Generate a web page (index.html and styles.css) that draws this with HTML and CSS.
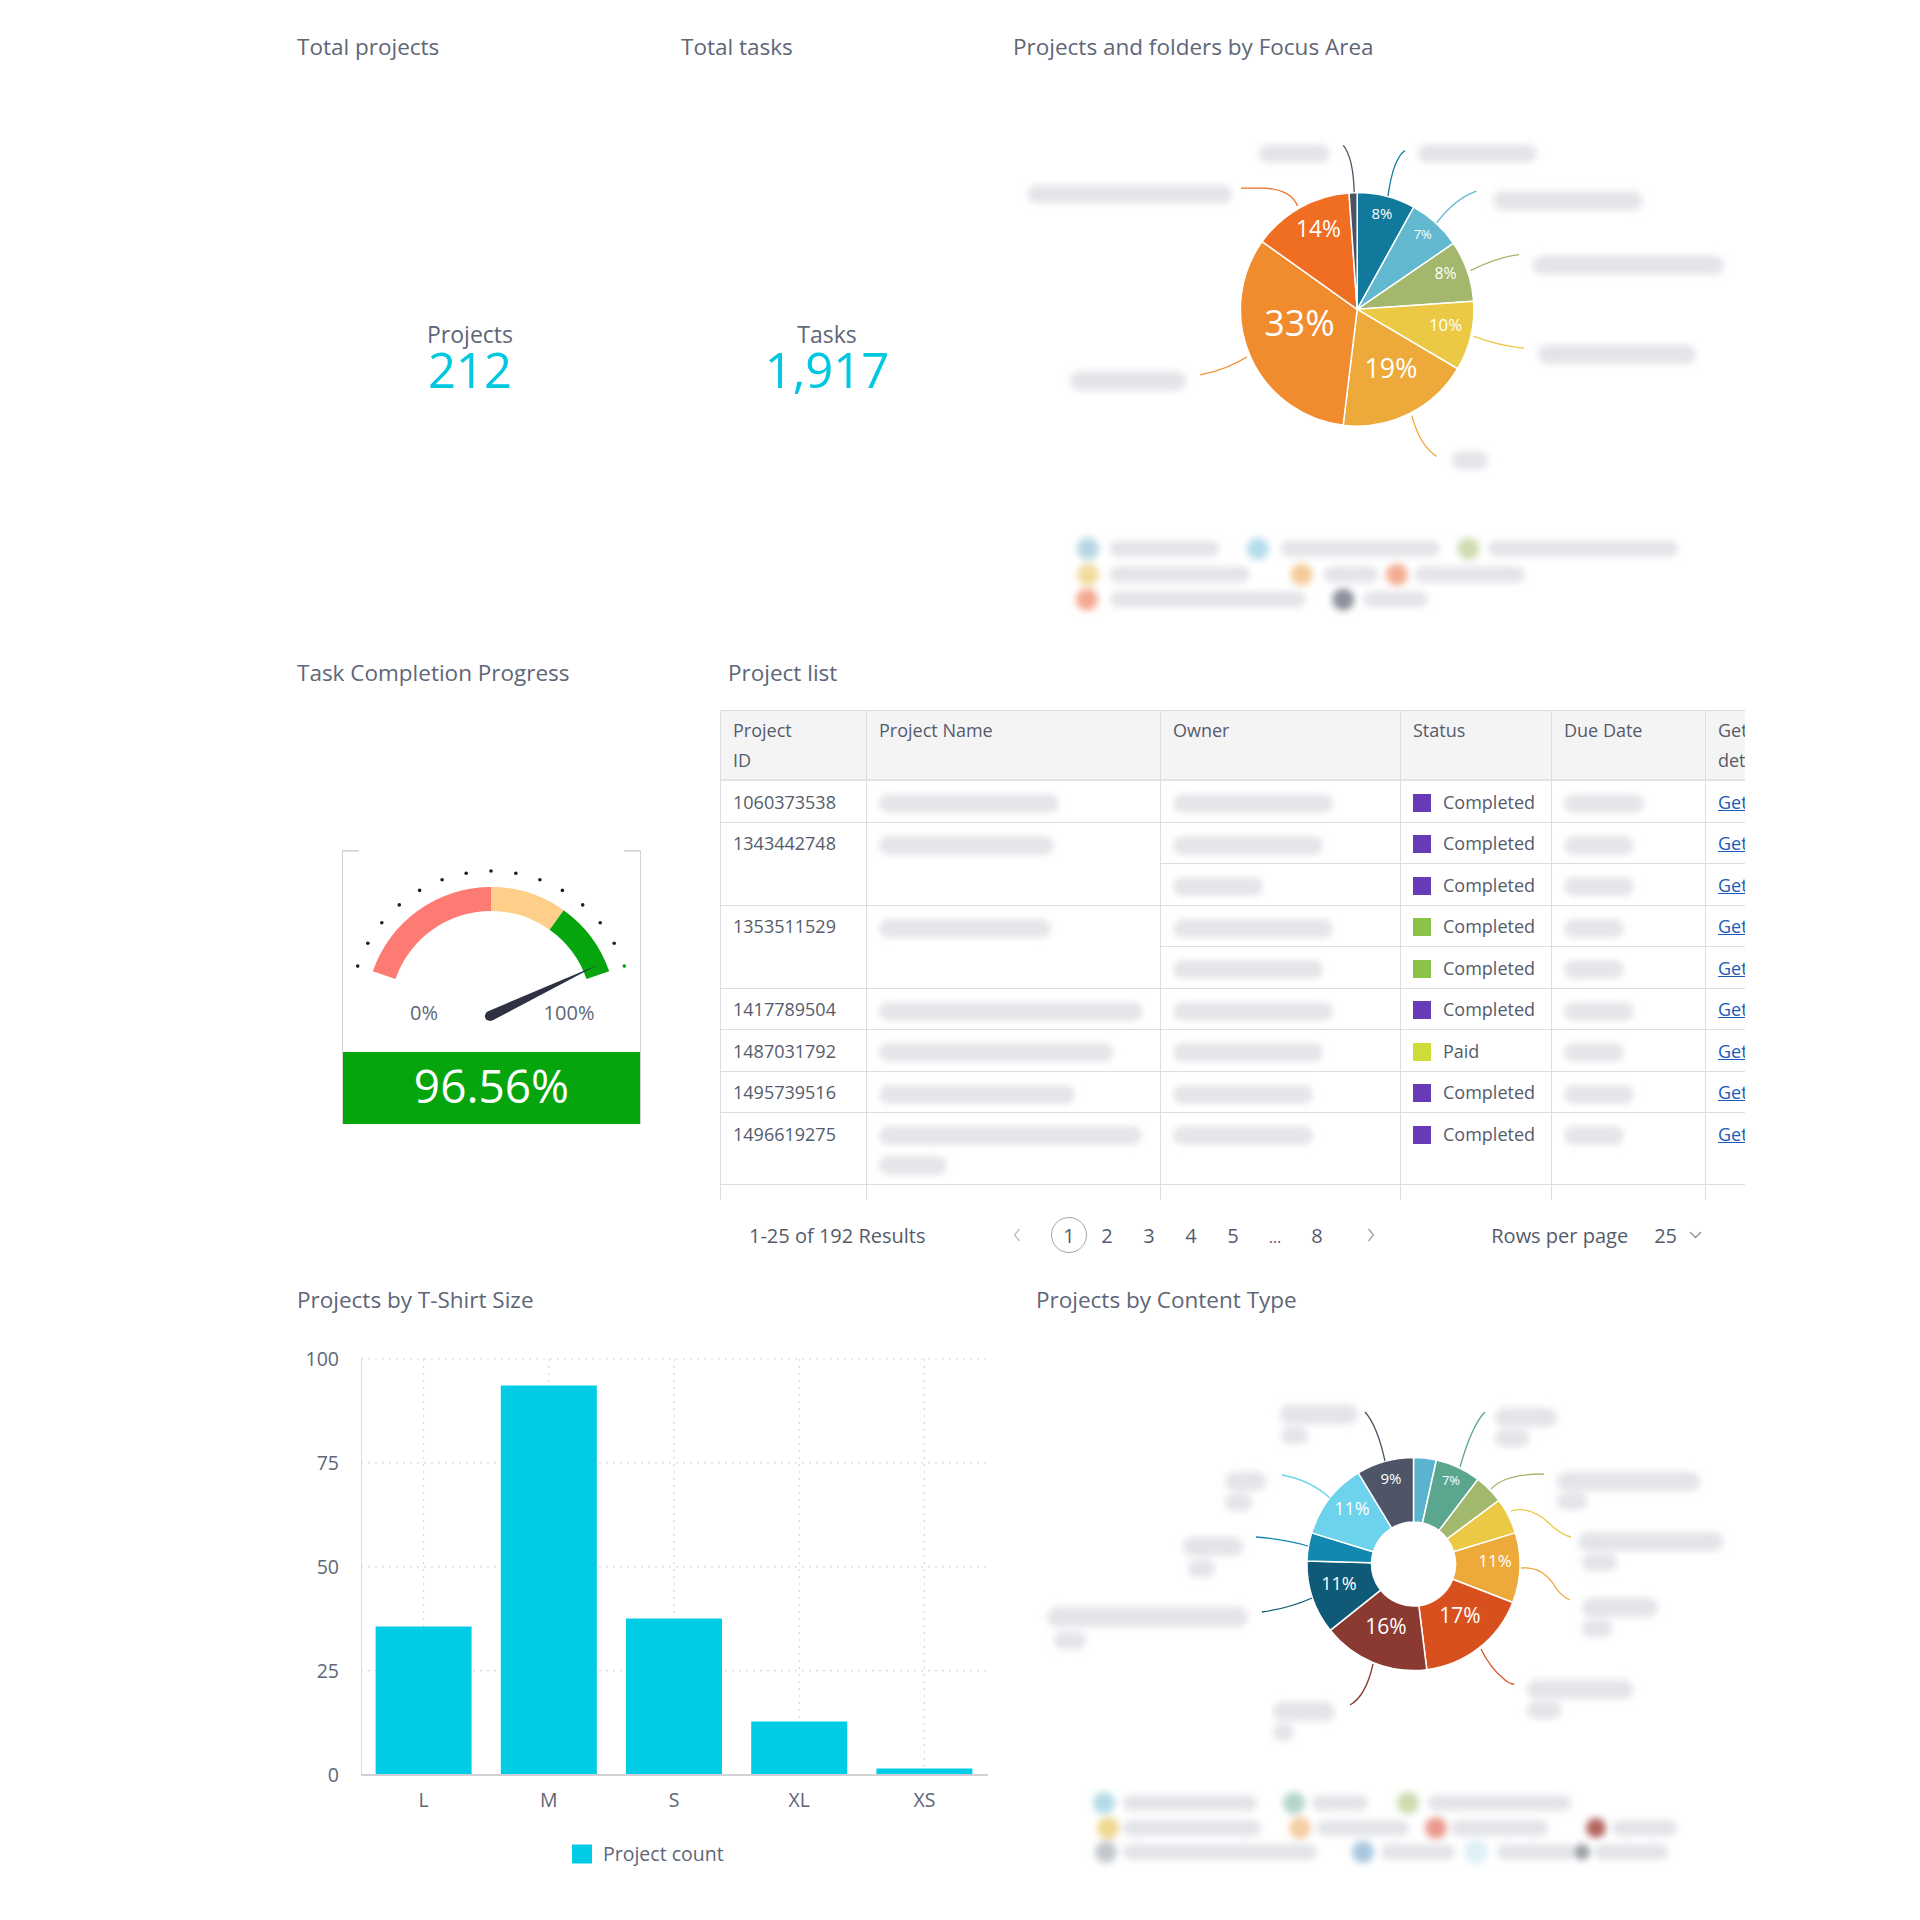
FILE: index.html
```html
<!DOCTYPE html>
<html lang="en">
<head>
<meta charset="utf-8">
<title>Projects dashboard</title>
<link rel="stylesheet" href="styles.css">
</head>
<body>
<div class="dash">

  <div class="row row1">
    <section class="panel p-projects">
      <h2 class="title">Total projects</h2>
      <div class="kpi">
        <div class="kpi-label">Projects</div>
        <div class="kpi-value">212</div>
      </div>
    </section>
    <section class="panel p-tasks">
      <h2 class="title">Total tasks</h2>
      <div class="kpi">
        <div class="kpi-label">Tasks</div>
        <div class="kpi-value">1,917</div>
      </div>
    </section>
    <section class="panel p-focus">
      <h2 class="title">Projects and folders by Focus Area</h2>
      <svg class="chart" width="740" height="602" viewBox="1013 61 740 602">
        <defs><filter id="blA" x="-30%" y="-80%" width="160%" height="260%"><feGaussianBlur stdDeviation="3.5"/></filter></defs>
        <g stroke="#fff" stroke-width="1.5" stroke-linejoin="round">
          <path fill="#117a9c" d="M1357 311 L1357 193.5 A117.5 117.5 0 0 1 1414 208.2 Z"/>
          <path fill="#62b8ce" d="M1357 311 L1414 208.2 A117.5 117.5 0 0 1 1453.9 244.6 Z"/>
          <path fill="#a3b86c" d="M1357 311 L1453.9 244.6 A117.5 117.5 0 0 1 1474.2 302.8 Z"/>
          <path fill="#ebc944" d="M1357 311 L1474.2 302.8 A117.5 117.5 0 0 1 1458.1 370.8 Z"/>
          <path fill="#edaa3a" d="M1357 311 L1458.1 370.8 A117.5 117.5 0 0 1 1342.9 427.7 Z"/>
          <path fill="#f08b2e" d="M1357 311 L1342.9 427.7 A117.5 117.5 0 0 1 1261.3 242.8 Z"/>
          <path fill="#f06e22" d="M1357 311 L1261.3 242.8 A117.5 117.5 0 0 1 1348.8 193.8 Z"/>
          <path fill="#4a5264" d="M1357 311 L1348.8 193.8 A117.5 117.5 0 0 1 1357 193.5 Z"/>
        </g>
        <g fill="#fff" text-anchor="middle" dominant-baseline="central" class="svgtext">
          <text x="1382" y="214" font-size="15">8%</text>
          <text x="1423" y="235" font-size="13">7%</text>
          <text x="1446" y="274" font-size="16">8%</text>
          <text x="1446" y="326" font-size="17">10%</text>
          <text x="1391" y="370" font-size="27">19%</text>
          <text x="1299" y="324" font-size="36">33%</text>
          <text x="1318" y="230" font-size="23">14%</text>
        </g>
        <g fill="none" stroke-width="1.3">
          <path stroke="#4a5264" d="M1354 193 Q1353 158 1343 146"/>
          <path stroke="#117a9c" d="M1388 197 Q1393 160 1405 151"/>
          <path stroke="#62b8ce" d="M1437 224 Q1455 200 1477 192"/>
          <path stroke="#a3b86c" d="M1471 272 Q1500 258 1520 256"/>
          <path stroke="#ebc944" d="M1474 338 Q1500 348 1525 350"/>
          <path stroke="#edaa3a" d="M1412 418 Q1420 448 1437 459"/>
          <path stroke="#f08b2e" d="M1246 359 Q1225 372 1199 377"/>
          <path stroke="#f06e22" d="M1297 207 Q1290 190 1262 189 L1240 189"/>
        </g>
        <g fill="#e3e4e8" filter="url(#blA)">
          <rect x="1258" y="145" width="71" height="18" rx="9"/>
          <rect x="1418" y="145" width="120" height="18" rx="9"/>
          <rect x="1494" y="192" width="150" height="19" rx="9"/>
          <rect x="1534" y="257" width="192" height="19" rx="9"/>
          <rect x="1539" y="347" width="159" height="19" rx="9"/>
          <rect x="1452" y="454" width="37" height="18" rx="9"/>
          <rect x="1068" y="373" width="117" height="20" rx="10"/>
          <rect x="1025" y="186" width="206" height="18" rx="9"/>
          <circle cx="1086" cy="552" r="11" fill="#b5d6e2"/>
          <rect x="1108" y="544" width="110" height="16" rx="8"/>
          <circle cx="1257" cy="552" r="11" fill="#b3dcec"/>
          <rect x="1280" y="544" width="160" height="16" rx="8"/>
          <circle cx="1469" cy="552" r="11" fill="#cfdcb0"/>
          <rect x="1489" y="544" width="191" height="16" rx="8"/>
          <circle cx="1086" cy="578" r="11" fill="#f1dc9c"/>
          <rect x="1108" y="570" width="141" height="16" rx="8"/>
          <circle cx="1301" cy="578" r="11" fill="#f5cb98"/>
          <rect x="1323" y="570" width="55" height="16" rx="8"/>
          <circle cx="1397" cy="578" r="11" fill="#f3ad92"/>
          <rect x="1415" y="570" width="111" height="16" rx="8"/>
          <circle cx="1085" cy="603" r="11" fill="#f4a78f"/>
          <rect x="1108" y="595" width="197" height="16" rx="8"/>
          <circle cx="1343" cy="603" r="11" fill="#8d919b"/>
          <rect x="1363" y="595" width="65" height="16" rx="8"/>
        </g>
      </svg>
    </section>
  </div>

  <div class="row row2">
    <section class="panel p-gauge">
      <h2 class="title">Task Completion Progress</h2>
      <div class="gauge-box">
        <svg class="gauge" width="297" height="202" viewBox="343 850 297 202">
          <g stroke="#cfcfcf" stroke-width="1.5">
            <line x1="343" y1="850.75" x2="359" y2="850.75"/>
            <line x1="624" y1="850.75" x2="640" y2="850.75"/>
          </g>
          <path fill="#fe7b74" d="M372.8 971.3 A125 125 0 0 1 491 887 L491 911 A101 101 0 0 0 395.5 979.1 Z"/>
          <path fill="#ffce88" d="M491 887 A125 125 0 0 1 563.6 910.2 L549.65 929.8 A101 101 0 0 0 491 911 Z"/>
          <path fill="#06a50e" d="M563.6 910.2 A125 125 0 0 1 609.2 971.3 L586.5 979.1 A101 101 0 0 0 549.65 929.8 Z"/>
          <g fill="#1d1f24">
            <circle cx="357.7" cy="966.1" r="1.8"/>
            <circle cx="367.8" cy="943.3" r="1.8"/>
            <circle cx="381.8" cy="922.8" r="1.8"/>
            <circle cx="399.3" cy="904.9" r="1.8"/>
            <circle cx="419.6" cy="890.4" r="1.8"/>
            <circle cx="442.1" cy="879.7" r="1.8"/>
            <circle cx="466.2" cy="873.2" r="1.8"/>
            <circle cx="491" cy="871" r="1.8"/>
            <circle cx="515.8" cy="873.2" r="1.8"/>
            <circle cx="539.9" cy="879.7" r="1.8"/>
            <circle cx="562.4" cy="890.4" r="1.8"/>
            <circle cx="582.7" cy="904.9" r="1.8"/>
            <circle cx="600.2" cy="922.8" r="1.8"/>
            <circle cx="614.2" cy="943.3" r="1.8"/>
          </g>
          <circle cx="624.3" cy="966.1" r="1.8" fill="#06a50e"/>
          <g fill="#2d3142">
            <path d="M487.6 1011.5 L597.5 965 L492.4 1020.5 Z"/>
            <circle cx="490" cy="1016" r="5.1"/>
          </g>
          <g class="svgtext" fill="#5e6678" font-size="20" text-anchor="middle">
            <text x="424" y="1020">0%</text>
            <text x="569" y="1020">100%</text>
          </g>
        </svg>
        <div class="gauge-value">96.56%</div>
      </div>
    </section>

    <section class="panel p-list">
      <h2 class="title list-title">Project list</h2>
      <div class="table-wrap">
        <table class="ptable">
          <colgroup>
            <col class="c-id"><col class="c-name"><col class="c-owner"><col class="c-status"><col class="c-due"><col class="c-get">
          </colgroup>
          <thead>
            <tr><th>Project<br>ID</th><th>Project Name</th><th>Owner</th><th>Status</th><th>Due Date</th><th>Get<br>details</th></tr>
          </thead>
          <tbody>
            <tr>
              <td>1060373538</td><td><span class="blob w180"></span></td><td><span class="blob w160"></span></td>
              <td><span class="sq sq-purple"></span>Completed</td><td><span class="blob w80"></span></td><td><a href="#">Get details</a></td>
            </tr>
            <tr>
              <td rowspan="2">1343442748</td><td rowspan="2"><span class="blob w175"></span></td><td><span class="blob w150"></span></td>
              <td><span class="sq sq-purple"></span>Completed</td><td><span class="blob w70"></span></td><td><a href="#">Get details</a></td>
            </tr>
            <tr>
              <td><span class="blob w90"></span></td>
              <td><span class="sq sq-purple"></span>Completed</td><td><span class="blob w70"></span></td><td><a href="#">Get details</a></td>
            </tr>
            <tr>
              <td rowspan="2">1353511529</td><td rowspan="2"><span class="blob w172"></span></td><td><span class="blob w160"></span></td>
              <td><span class="sq sq-green"></span>Completed</td><td><span class="blob w60"></span></td><td><a href="#">Get details</a></td>
            </tr>
            <tr>
              <td><span class="blob w150"></span></td>
              <td><span class="sq sq-green"></span>Completed</td><td><span class="blob w60"></span></td><td><a href="#">Get details</a></td>
            </tr>
            <tr>
              <td>1417789504</td><td><span class="blob w264"></span></td><td><span class="blob w160"></span></td>
              <td><span class="sq sq-purple"></span>Completed</td><td><span class="blob w70"></span></td><td><a href="#">Get details</a></td>
            </tr>
            <tr>
              <td>1487031792</td><td><span class="blob w234"></span></td><td><span class="blob w150"></span></td>
              <td><span class="sq sq-lime"></span>Paid</td><td><span class="blob w60"></span></td><td><a href="#">Get details</a></td>
            </tr>
            <tr>
              <td>1495739516</td><td><span class="blob w196"></span></td><td><span class="blob w140"></span></td>
              <td><span class="sq sq-purple"></span>Completed</td><td><span class="blob w70"></span></td><td><a href="#">Get details</a></td>
            </tr>
            <tr>
              <td>1496619275</td><td><span class="blob w263"></span><br><span class="blob w68"></span></td><td><span class="blob w140"></span></td>
              <td><span class="sq sq-purple"></span>Completed</td><td><span class="blob w60"></span></td><td><a href="#">Get details</a></td>
            </tr>
            <tr class="row-cut">
              <td></td><td></td><td></td>
              <td><span class="sq sq-purple"></span>Completed</td><td></td><td><a href="#">Get details</a></td>
            </tr>
          </tbody>
        </table>
      </div>
      <div class="pager">
        <span class="results">1-25 of 192 Results</span>
        <nav class="pages">
          <span class="arrow arrow-prev"><svg width="8" height="14" viewBox="0 0 8 14"><path d="M6.5 1 L1.5 7 L6.5 13" fill="none" stroke="#b8bcc4" stroke-width="1.3"/></svg></span>
          <span class="pg current">1</span>
          <span class="pg">2</span>
          <span class="pg">3</span>
          <span class="pg">4</span>
          <span class="pg">5</span>
          <span class="pg dots">...</span>
          <span class="pg">8</span>
          <span class="arrow arrow-next"><svg width="8" height="14" viewBox="0 0 8 14"><path d="M1.5 1 L6.5 7 L1.5 13" fill="none" stroke="#9aa0aa" stroke-width="1.3"/></svg></span>
        </nav>
        <div class="rpp">
          <span>Rows per page</span>
          <span class="rpp-val">25</span>
          <svg class="chev" width="13" height="8" viewBox="0 0 13 8"><path d="M1 1 L6.5 6.5 L12 1" fill="none" stroke="#8a909a" stroke-width="1.3"/></svg>
        </div>
      </div>
    </section>
  </div>

  <div class="row row3">
    <section class="panel p-size">
      <h2 class="title">Projects by T-Shirt Size</h2>
      <svg class="chart" width="697" height="586" viewBox="297 1316.5 697 586">
        <g stroke="#d6d8dc" stroke-width="1.2" stroke-dasharray="2 5">
          <line x1="361" y1="1361.5" x2="987" y2="1361.5"/>
          <line x1="361" y1="1465.4" x2="987" y2="1465.4"/>
          <line x1="361" y1="1569.3" x2="987" y2="1569.3"/>
          <line x1="361" y1="1673.1" x2="987" y2="1673.1"/>
          <line x1="423.6" y1="1361.5" x2="423.6" y2="1777"/>
          <line x1="548.8" y1="1361.5" x2="548.8" y2="1777"/>
          <line x1="674" y1="1361.5" x2="674" y2="1777"/>
          <line x1="799.2" y1="1361.5" x2="799.2" y2="1777"/>
          <line x1="924.4" y1="1361.5" x2="924.4" y2="1777"/>
        </g>
        <line x1="361.5" y1="1360" x2="361.5" y2="1778" stroke="#dcdde1" stroke-width="1"/>
        <g fill="#00cde5">
          <rect x="375.6" y="1629" width="96" height="148"/>
          <rect x="500.8" y="1388" width="96" height="389"/>
          <rect x="626" y="1621" width="96" height="156"/>
          <rect x="751.2" y="1724" width="96" height="53"/>
          <rect x="876.4" y="1771" width="96" height="6"/>
        </g>
        <line x1="361" y1="1777.5" x2="988" y2="1777.5" stroke="#cfd1d6" stroke-width="2"/>
        <g class="svgtext" fill="#5e6678" font-size="19.5" text-anchor="end">
          <text x="339" y="1368.5">100</text>
          <text x="339" y="1472.5">75</text>
          <text x="339" y="1576.5">50</text>
          <text x="339" y="1680.5">25</text>
          <text x="339" y="1784.5">0</text>
        </g>
        <g class="svgtext" fill="#5e6678" font-size="19.5" text-anchor="middle">
          <text x="423.6" y="1809">L</text>
          <text x="548.8" y="1809">M</text>
          <text x="674" y="1809">S</text>
          <text x="799.2" y="1809">XL</text>
          <text x="924.4" y="1809">XS</text>
        </g>
        <rect x="572" y="1847" width="20" height="19" fill="#00cde5"/>
        <text class="svgtext" x="603" y="1863" fill="#5e6678" font-size="19.5">Project count</text>
      </svg>
    </section>

    <section class="panel p-content">
      <h2 class="title">Projects by Content Type</h2>
      <svg class="chart" width="717" height="586" viewBox="1036 1314 717 586">
        <defs><filter id="blB" x="-30%" y="-80%" width="160%" height="260%"><feGaussianBlur stdDeviation="3.5"/></filter></defs>
        <g stroke="#fff" stroke-width="1.5" stroke-linejoin="round">
          <path fill="#5ab4cf" d="M1413.5 1457.5 A106.5 106.5 0 0 1 1436.4 1460 L1422.5 1523 A42 42 0 0 0 1413.5 1522 Z"/>
          <path fill="#5aa68f" d="M1436.4 1460 A106.5 106.5 0 0 1 1478 1479.3 L1439 1530.6 A42 42 0 0 0 1422.5 1523 Z"/>
          <path fill="#a2b86c" d="M1478 1479.3 A106.5 106.5 0 0 1 1498.9 1500.4 L1447.2 1538.9 A42 42 0 0 0 1439 1530.6 Z"/>
          <path fill="#ebc944" d="M1498.9 1500.4 A106.5 106.5 0 0 1 1515.3 1532.9 L1453.7 1551.7 A42 42 0 0 0 1447.2 1538.9 Z"/>
          <path fill="#eda93a" d="M1515.3 1532.9 A106.5 106.5 0 0 1 1512.8 1602.5 L1452.7 1579.2 A42 42 0 0 0 1453.7 1551.7 Z"/>
          <path fill="#d9501f" d="M1512.8 1602.5 A106.5 106.5 0 0 1 1426.8 1669.7 L1418.8 1605.7 A42 42 0 0 0 1452.7 1579.2 Z"/>
          <path fill="#8a3a31" d="M1426.8 1669.7 A106.5 106.5 0 0 1 1330.2 1630.3 L1380.6 1590.1 A42 42 0 0 0 1418.8 1605.7 Z"/>
          <path fill="#0f5a76" d="M1330.2 1630.3 A106.5 106.5 0 0 1 1307 1561 L1371.5 1562.8 A42 42 0 0 0 1380.6 1590.1 Z"/>
          <path fill="#1487b0" d="M1307 1561 A106.5 106.5 0 0 1 1311.7 1532.9 L1373.3 1551.7 A42 42 0 0 0 1371.5 1562.8 Z"/>
          <path fill="#6dd3ed" d="M1311.7 1532.9 A106.5 106.5 0 0 1 1358.3 1472.9 L1391.7 1528.1 A42 42 0 0 0 1373.3 1551.7 Z"/>
          <path fill="#4d5566" d="M1358.3 1472.9 A106.5 106.5 0 0 1 1413.5 1457.5 L1413.5 1522 A42 42 0 0 0 1391.7 1528.1 Z"/>
        </g>
        <g fill="#fff" text-anchor="middle" dominant-baseline="central" class="svgtext">
          <text x="1391" y="1478" font-size="15">9%</text>
          <text x="1451" y="1480" font-size="13">7%</text>
          <text x="1352" y="1508" font-size="18">11%</text>
          <text x="1495" y="1560" font-size="17">11%</text>
          <text x="1339" y="1583" font-size="18">11%</text>
          <text x="1386" y="1626" font-size="21">16%</text>
          <text x="1460" y="1615" font-size="21">17%</text>
        </g>
        <g fill="none" stroke-width="1.3">
          <path stroke="#4d5566" d="M1385 1461 Q1377 1425 1365 1412"/>
          <path stroke="#5aa68f" d="M1460 1467 Q1472 1425 1485 1412"/>
          <path stroke="#a2b86c" d="M1491 1489 Q1505 1474 1544 1474"/>
          <path stroke="#ebc944" d="M1511 1511 Q1530 1505 1550 1524 Q1560 1534 1571 1537"/>
          <path stroke="#eda93a" d="M1521 1568 Q1540 1566 1552 1582 Q1560 1596 1570 1600"/>
          <path stroke="#d9501f" d="M1481 1649 Q1490 1668 1505 1680 Q1510 1684 1514 1684"/>
          <path stroke="#8a3a31" d="M1373 1664 Q1366 1696 1350 1705"/>
          <path stroke="#0f5a76" d="M1312 1598 Q1290 1608 1262 1612"/>
          <path stroke="#1487b0" d="M1308 1546 Q1285 1539 1256 1537"/>
          <path stroke="#6dd3ed" d="M1330 1498 Q1310 1480 1282 1475"/>
        </g>
        <g fill="#e3e4e8" filter="url(#blB)">
          <rect x="1280" y="1405" width="78" height="19" rx="9"/>
          <rect x="1281" y="1427" width="27" height="17" rx="8"/>
          <rect x="1495" y="1408" width="62" height="19" rx="9"/>
          <rect x="1495" y="1430" width="34" height="17" rx="8"/>
          <rect x="1557" y="1472" width="143" height="19" rx="9"/>
          <rect x="1557" y="1493" width="30" height="17" rx="8"/>
          <rect x="1578" y="1532" width="145" height="19" rx="9"/>
          <rect x="1582" y="1554" width="35" height="17" rx="8"/>
          <rect x="1582" y="1598" width="76" height="19" rx="9"/>
          <rect x="1582" y="1620" width="30" height="17" rx="8"/>
          <rect x="1527" y="1680" width="106" height="19" rx="9"/>
          <rect x="1527" y="1702" width="34" height="17" rx="8"/>
          <rect x="1273" y="1702" width="62" height="19" rx="9"/>
          <rect x="1273" y="1724" width="21" height="17" rx="8"/>
          <rect x="1047" y="1607" width="201" height="20" rx="10"/>
          <rect x="1054" y="1632" width="32" height="17" rx="8"/>
          <rect x="1183" y="1537" width="60" height="19" rx="9"/>
          <rect x="1188" y="1560" width="27" height="17" rx="8"/>
          <rect x="1225" y="1472" width="41" height="19" rx="9"/>
          <rect x="1225" y="1494" width="27" height="17" rx="8"/>
          <circle cx="1104" cy="1803" r="11" fill="#b3dbe6"/>
          <rect x="1123" y="1795" width="134" height="16" rx="8"/>
          <circle cx="1294" cy="1803" r="11" fill="#b2d5c8"/>
          <rect x="1312" y="1795" width="56" height="16" rx="8"/>
          <circle cx="1408" cy="1803" r="11" fill="#cddcae"/>
          <rect x="1428" y="1795" width="143" height="16" rx="8"/>
          <circle cx="1108" cy="1828" r="11" fill="#efd88e"/>
          <rect x="1123" y="1820" width="138" height="16" rx="8"/>
          <circle cx="1300" cy="1828" r="11" fill="#f4cda2"/>
          <rect x="1317" y="1820" width="92" height="16" rx="8"/>
          <circle cx="1436" cy="1828" r="11" fill="#eb9a8e"/>
          <rect x="1451" y="1820" width="97" height="16" rx="8"/>
          <circle cx="1596" cy="1828" r="10" fill="#b4635c"/>
          <rect x="1612" y="1820" width="65" height="16" rx="8"/>
          <circle cx="1106" cy="1852" r="11" fill="#c3c8ce"/>
          <rect x="1123" y="1844" width="194" height="16" rx="8"/>
          <circle cx="1363" cy="1852" r="11" fill="#a9c7e0"/>
          <rect x="1381" y="1844" width="74" height="16" rx="8"/>
          <circle cx="1476" cy="1852" r="12" fill="#dcf0f6"/>
          <rect x="1497" y="1844" width="78" height="16" rx="8"/>
          <circle cx="1582" cy="1852" r="8" fill="#9a9ea6"/>
          <rect x="1594" y="1844" width="74" height="16" rx="8"/>
        </g>
      </svg>
    </section>
  </div>

</div>
</body>
</html>
```

FILE: styles.css
```css
html, body {
  margin: 0;
  padding: 0;
  background: #ffffff;
}

body {
  font-family: "Open Sans", "Noto Sans", "Liberation Sans", sans-serif;
  color: #555b6b;
  font-size: 18px;
}

.dash {
  width: 1456px;
  margin-left: 297px;
  padding-top: 33px;
}

.row {
  display: flex;
}

.row1 { height: 626px; }
.row2 { height: 627px; gap: 42px; }
.row3 { height: 614px; gap: 42px; }

.panel {
  display: flex;
  flex-direction: column;
  flex: none;
}

.title {
  margin: 0;
  font-size: 22.5px;
  line-height: 28px;
  font-weight: 400;
  color: #5e6678;
  white-space: nowrap;
}

.svgtext {
  font-family: "Open Sans", "Noto Sans", "Liberation Sans", sans-serif;
}

.chart { display: block; }

.p-projects { width: 346px; }
.p-tasks { width: 292px; margin-left: 38px; }
.p-focus { width: 740px; margin-left: 40px; }

.kpi {
  margin-top: 259px;
  text-align: center;
}

.kpi-label {
  font-size: 23px;
  line-height: 28px;
  color: #5e6678;
}

.kpi-value {
  font-size: 49px;
  line-height: 42px;
  color: #00c8e0;
}

.p-gauge { width: 381px; }
.p-list { width: 1033px; }

.gauge-box {
  margin-top: 163px;
  margin-left: 45px;
  width: 297px;
  border-left: 1px solid #d3d3d3;
  border-right: 1px solid #d3d3d3;
}

.gauge { display: block; }

.gauge-value {
  height: 72px;
  background: #05a50d;
  color: #ffffff;
  font-size: 46px;
  line-height: 66px;
  text-align: center;
}

.list-title { padding-left: 8px; }

.table-wrap {
  margin-top: 23px;
  width: 1025px;
  height: 490px;
  overflow: hidden;
}

.ptable {
  table-layout: fixed;
  width: 1100px;
  border-collapse: collapse;
  font-size: 18px;
  color: #555b6b;
}

.c-id { width: 146px; }
.c-name { width: 294px; }
.c-owner { width: 240px; }
.c-status { width: 151px; }
.c-due { width: 154px; }
.c-get { width: 115px; }

.ptable th,
.ptable td {
  border: 1px solid #dcdde3;
  padding: 5.5px 12px 5px 12px;
  line-height: 30px;
  text-align: left;
  vertical-align: top;
  white-space: nowrap;
  overflow: hidden;
}

.ptable th {
  padding-top: 4px;
  padding-bottom: 4px;
  background: #f4f4f5;
  font-weight: 400;
  border-bottom: 2px solid #e2e3e7;
}

.ptable .row-cut td {
  padding-top: 10px;
}

.ptable a {
  color: #1a5cb8;
  text-decoration: underline;
}

.blob {
  display: inline-block;
  vertical-align: middle;
  height: 19px;
  border-radius: 10px;
  background: #e5e6e9;
  filter: blur(3px);
}

.w60 { width: 60px; }
.w68 { width: 68px; }
.w70 { width: 70px; }
.w80 { width: 80px; }
.w90 { width: 90px; }
.w140 { width: 140px; }
.w150 { width: 150px; }
.w160 { width: 160px; }
.w172 { width: 172px; }
.w175 { width: 175px; }
.w180 { width: 180px; }
.w196 { width: 196px; }
.w234 { width: 234px; }
.w263 { width: 263px; }
.w264 { width: 264px; }

.sq {
  display: inline-block;
  width: 18px;
  height: 18px;
  margin-right: 12px;
  vertical-align: -3px;
}

.sq-purple { background: #673ab7; }
.sq-green { background: #8bc34a; }
.sq-lime { background: #cddc39; }

.pager {
  display: flex;
  align-items: center;
  height: 70px;
  padding-left: 29px;
  padding-right: 51px;
  color: #555b6b;
  font-size: 20px;
}

.results {
  width: 247px;
  flex: none;
  white-space: nowrap;
}

.pages {
  display: flex;
  align-items: center;
}

.arrow {
  width: 42px;
  height: 36px;
  display: flex;
  align-items: center;
  justify-content: center;
}

.arrow-prev { margin-right: 10px; }
.arrow-next { margin-left: 12px; }

.pg {
  width: 42px;
  height: 36px;
  display: flex;
  align-items: center;
  justify-content: center;
}

.pg.current {
  position: relative;
  margin-right: -4px;
}

.pg.current::after {
  content: "";
  position: absolute;
  left: 3px;
  top: 0;
  width: 34px;
  height: 34px;
  border: 1px solid #9ea3ab;
  border-radius: 50%;
}

.pg.dots {
  font-size: 16px;
  padding-top: 4px;
}

.rpp {
  margin-left: auto;
  display: flex;
  align-items: center;
  white-space: nowrap;
}

.rpp-val {
  margin-left: 26px;
}

.chev {
  margin-left: 12px;
}

.p-size { width: 697px; }
.p-content { width: 717px; }
```
